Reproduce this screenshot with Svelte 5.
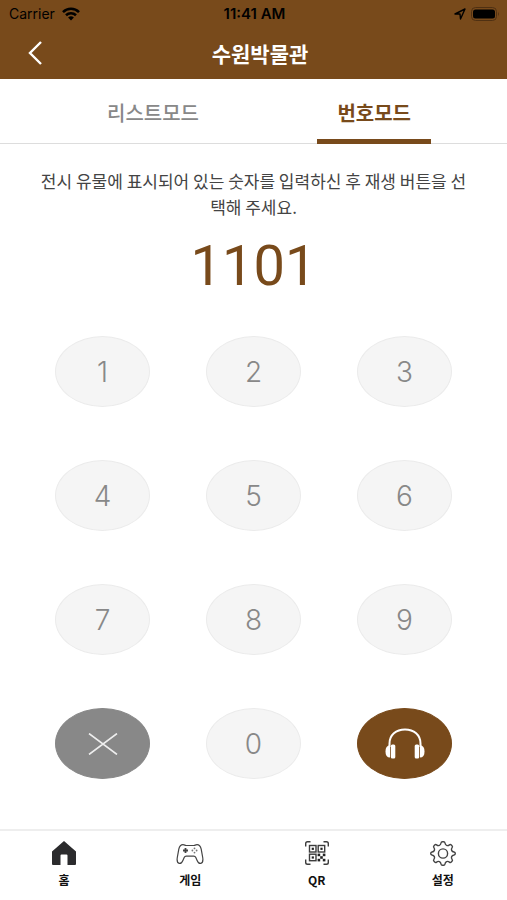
<script>
  const tabs = [
    { id: 'list', label: '리스트모드' },
    { id: 'number', label: '번호모드' },
  ];
  const digits = ['1', '2', '3', '4', '5', '6', '7', '8', '9'];

  let mode = $state('number');
  let code = $state('1101');

  function press(digit) {
    if (code.length < 4) code += digit;
  }

  function clear() {
    code = '';
  }
</script>

<div class="app">
  <header>
    <div class="status">
      <span class="carrier">
        Carrier
        <svg width="18" height="14" viewBox="0 0 18 14" aria-hidden="true">
          <g fill="none" stroke="#000" stroke-width="2.6">
            <path d="M1 5.1a11.4 11.4 0 0 1 16 0" />
            <path d="M4 8.3a7.2 7.2 0 0 1 10 0" />
          </g>
          <path d="M9 13.6 6.1 10.6a4.2 4.2 0 0 1 5.8 0z" />
        </svg>
      </span>
      <span class="time">11:41 AM</span>
      <span class="power">
        <svg width="12" height="12" viewBox="0 0 12 12" aria-hidden="true">
          <path d="M1 6 11 1 6.5 11 6 6z" fill="none" stroke="#000" stroke-width="1.4" stroke-linejoin="round" />
        </svg>
        <svg width="29" height="14" viewBox="0 0 29 14" aria-hidden="true">
          <rect x="0.5" y="0.5" width="25" height="13" rx="4" fill="none" stroke="#4f3012" />
          <rect x="2" y="2.5" width="22" height="9" rx="2.5" />
          <path d="M27 4.8q1.8 2.2 0 4.4z" fill="#4f3012" />
        </svg>
      </span>
    </div>
    <div class="title-bar">
      <button class="back" aria-label="뒤로">
        <svg width="16" height="26" viewBox="0 0 16 26" aria-hidden="true">
          <path d="M14 2 3 13l11 11" fill="none" stroke="#fff" stroke-width="2.4" />
        </svg>
      </button>
      <h1>수원박물관</h1>
    </div>
  </header>

  <div class="tabs" role="tablist">
    {#each tabs as tab}
      <button
        class="tab"
        class:active={mode === tab.id}
        role="tab"
        aria-selected={mode === tab.id}
        onclick={() => (mode = tab.id)}>{tab.label}</button>
    {/each}
  </div>

  <main>
    <p class="guide">전시 유물에 표시되어 있는 숫자를 입력하신 후 재생 버튼을 선택해 주세요.</p>
    <output class="code">{code}</output>

    <div class="keypad">
      {#each digits as digit}
        <button class="key" onclick={() => press(digit)}>{digit}</button>
      {/each}
      <button class="key clear" aria-label="지우기" onclick={clear}>
        <svg width="30" height="22" viewBox="0 0 30 22" aria-hidden="true">
          <path d="M1 0.5 29 21.5M29 0.5 1 21.5" fill="none" stroke="#eee" stroke-width="1.6" />
        </svg>
      </button>
      <button class="key" onclick={() => press('0')}>0</button>
      <button class="key play" aria-label="재생">
        <svg width="40" height="32" viewBox="0 0 40 32" aria-hidden="true">
          <path d="M4.5 19v-3.5C4.5 7 11 1.5 20 1.5S35.5 7 35.5 15.5V19" fill="none" stroke="#fff" stroke-width="2" />
          <g fill="#fff">
            <path d="M5 17v12.5C2 29.5 0.5 27.5 0.5 23.5S2 17.500 5 17z" />
            <path d="M35 17v12.500c3 0 4.500-2 4.500-6S38 17.500 35 17z" />
            <rect x="5.800" y="16.500" width="4.500" height="14" rx="1.500" />
            <rect x="29.700" y="16.500" width="4.500" height="14" rx="1.500" />
          </g>
        </svg>
      </button>
    </div>
  </main>

  <nav>
    <a href="#home">
      <svg width="28" height="28" viewBox="0 0 28 28" aria-hidden="true">
        <path d="M14 2 26 12.500V25q0 1-1 1h-7.500V16.500q0-1-1-1h-5q-1 0-1 1V26H3q-1 0-1-1V12.500z" fill="#2b2b2d" />
      </svg>
      홈
    </a>
    <a href="#game">
      <svg width="28" height="28" viewBox="0 0 28 28" fill="none" stroke="#444" stroke-width="1.2" aria-hidden="true">
        <path d="M7 5.600C8.500 5.600 9 6.500 10 6.500h8c1 0 1.500-.9 3-.9 2.500 0 3.600 2 4.200 4.600l1.500 8.300c.5 3-.2 5.400-2 5.900-2 .5-2.800-1-3.700-3.200l-1.200-2.800q-.6-1.300-2-1.300h-7.600q-1.400 0-2 1.300L7 21.200c-.9 2.200-1.700 3.700-3.700 3.200-1.800-.5-2.500-2.900-2-5.900l1.500-8.300C3.400 7.600 4.500 5.600 7 5.600z" />
        <path d="M9.500 9v5M7 11.500h5" stroke-width="1.800" />
        <g fill="#777" stroke="none">
          <circle cx="18.500" cy="9.400" r="0.900" />
          <circle cx="18.500" cy="13.600" r="0.900" />
          <circle cx="16.400" cy="11.500" r="0.900" />
          <circle cx="20.600" cy="11.500" r="0.900" />
        </g>
      </svg>
      게임
    </a>
    <a href="#qr">
      <svg width="28" height="28" viewBox="0 0 28 28" fill="none" stroke="#3c3c3c" stroke-width="1.400" aria-hidden="true">
        <path d="M2.700 7.500v-3q0-1.800 1.800-1.800h3M20.500 2.700h3q1.800 0 1.800 1.800v3M25.300 20.500v3q0 1.800-1.800 1.800h-3M7.500 25.300h-3q-1.800 0-1.800-1.800v-3" />
        <rect x="6.500" y="6.500" width="6.500" height="6.500" />
        <rect x="15.200" y="6.500" width="6.500" height="6.500" />
        <rect x="6.500" y="15.200" width="6.500" height="6.500" />
        <g fill="#222" stroke="none">
          <rect x="8.700" y="8.700" width="2.200" height="2.200" />
          <rect x="17.400" y="8.700" width="2.200" height="2.200" />
          <rect x="8.700" y="17.400" width="2.200" height="2.200" />
          <rect x="14.600" y="14.600" width="2.600" height="2.600" />
          <rect x="19.800" y="14.600" width="2.600" height="2.600" />
          <rect x="17.200" y="17.200" width="2.600" height="2.600" />
          <rect x="14.600" y="19.800" width="2.600" height="2.600" />
          <rect x="19.800" y="19.800" width="2.600" height="2.600" />
        </g>
      </svg>
      QR
    </a>
    <a href="#settings">
      <svg width="28" height="28" viewBox="0 0 28 28" fill="none" stroke="#444" stroke-width="1.400" stroke-linejoin="round" aria-hidden="true">
        <path d="M12 4q.2-1.300 1.400-1.300h1.200q1.200 0 1.400 1.300c.3 2.400 2.600 3.300 4.400 1.900q1-.8 1.900.1l.7.700q.9.900.1 1.900c-1.400 1.800-.5 4.100 1.900 4.400q1.300.2 1.300 1.400v.2q0 1.200-1.300 1.400c-2.400.3-3.300 2.600-1.900 4.400q.8 1-.1 1.900l-.7.700q-.9.900-1.900.1c-1.800-1.400-4.100-.5-4.400 1.900q-.2 1.300-1.400 1.300h-1.200q-1.200 0-1.400-1.300c-.3-2.400-2.600-3.300-4.400-1.900q-1 .8-1.900-.1l-.7-.7q-.9-.9-.1-1.900c1.400-1.800.5-4.100-1.900-4.400q-1.300-.2-1.300-1.400v-.2q0-1.200 1.300-1.400c2.400-.3 3.300-2.600 1.900-4.400q-.8-1 .1-1.900l.7-.7q.9-.9 1.900-.1C9.400 7.300 11.700 6.400 12 4z" />
        <circle cx="14" cy="14.500" r="4.600" />
      </svg>
      설정
    </a>
  </nav>
</div>

<style>
  :global(body) {
    margin: 0;
    background: #fff;
  }
  .app {
    display: flex;
    flex-direction: column;
    min-height: 100vh;
    font-family: "Noto Sans CJK KR", sans-serif;
    color: #444;
  }
  button {
    padding: 0;
    border: 0;
    background: none;
    font: inherit;
    color: inherit;
    cursor: pointer;
  }
  svg {
    display: block;
  }
  header {
    background: #784a1b;
  }
  .status {
    display: grid;
    grid-template-columns: 1fr auto 1fr;
    align-items: center;
    height: 27px;
    padding: 0 7px 0 9px;
    font-family: Inter, sans-serif;
    font-size: 14px;
    color: #000;
  }
  .carrier {
    display: flex;
    align-items: center;
    gap: 7px;
  }
  .time {
    font-size: 15px;
    font-weight: 600;
  }
  .power {
    display: flex;
    align-items: center;
    justify-content: flex-end;
    gap: 5px;
  }
  .title-bar {
    display: grid;
    grid-template-columns: 1fr auto 1fr;
    align-items: center;
    height: 52px;
    padding: 0 14px 0 27px;
  }
  .back {
    justify-self: start;
  }
  h1 {
    margin: 0;
    font-size: 21px;
    line-height: 32px;
    font-weight: bold;
    color: #fff;
  }
  .tabs {
    display: flex;
    justify-content: space-between;
    height: 64px;
    padding: 0 76px 0 87px;
    border-bottom: 1px solid #ddd;
  }
  .tab {
    height: 65px;
    padding: 6px 20px 0;
    border-bottom: 5px solid transparent;
    font-size: 20px;
    font-weight: 500;
    color: #888;
  }
  .tab.active {
    border-bottom-color: #784a1b;
    font-weight: bold;
    color: #784a1b;
  }
  main {
    padding: 24px 27px;
    text-align: center;
  }
  .guide {
    margin: 0;
    padding: 0 10px;
    font-size: 17px;
    line-height: 26px;
  }
  .code {
    display: block;
    height: 64px;
    margin: 14px 0 38px;
    font-family: Roboto, sans-serif;
    font-size: 56px;
    line-height: 64px;
    color: #784a1b;
  }
  .keypad {
    display: grid;
    grid-template-columns: repeat(3, 1fr);
    justify-items: center;
    row-gap: 53px;
  }
  .key {
    display: flex;
    align-items: center;
    justify-content: center;
    width: 95px;
    height: 71px;
    border: 1px solid #ebebeb;
    border-radius: 50%;
    background: #f5f5f5;
    font-family: Inter, sans-serif;
    font-size: 28px;
    font-weight: 300;
    font-optical-sizing: none;
    color: #888;
  }
  .key.clear {
    border-color: #888;
    background: #888;
  }
  .key.play {
    border-color: #784a1b;
    background: #784a1b;
  }
  nav {
    display: grid;
    grid-template-columns: repeat(4, 1fr);
    height: 69px;
    margin-top: auto;
    padding: 0 1px;
    border-top: 2px solid #eee;
  }
  nav a {
    display: flex;
    flex-direction: column;
    align-items: center;
    gap: 4px;
    padding-top: 8px;
    font-size: 12px;
    line-height: 18px;
    font-weight: bold;
    color: #111;
    text-decoration: none;
  }
</style>
